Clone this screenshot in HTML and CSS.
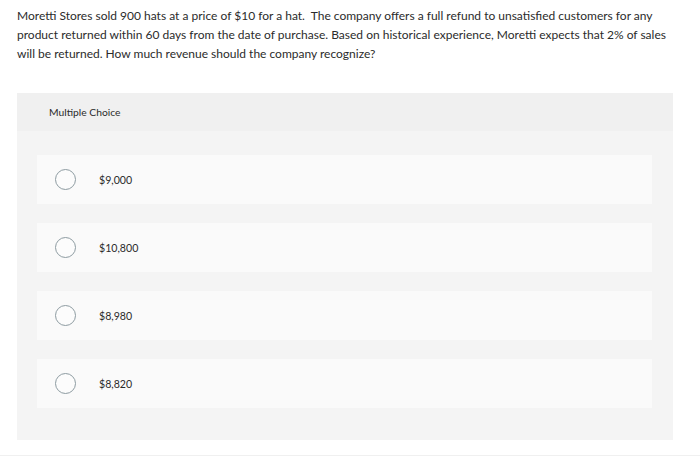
FILE: index.html
```html
<!DOCTYPE html>
<html>
<head>
<meta charset="utf-8">
<link rel="stylesheet" href="styles.css">
</head>
<body>
<div class="page">
  <p class="question">Moretti Stores sold 900 hats at a price of $10 for a hat.&nbsp; The company offers a full refund to unsatisfied customers for any product returned within 60 days from the date of purchase. Based on historical experience, Moretti expects that 2% of sales will be returned. How much revenue should the company recognize?</p>
  <div class="panel">
    <div class="panel-head">Multiple Choice</div>
    <div class="options">
      <div class="option"><span class="radio"></span><span class="label">$9,000</span></div>
      <div class="option"><span class="radio"></span><span class="label">$10,800</span></div>
      <div class="option"><span class="radio"></span><span class="label">$8,980</span></div>
      <div class="option"><span class="radio"></span><span class="label">$8,820</span></div>
    </div>
  </div>
  <div class="bottom-line"></div>
</div>
</body>
</html>
```
FILE: styles.css
```css
html, body {
  margin: 0;
  padding: 0;
  background: #ffffff;
}
.page {
  width: 700px;
  height: 458px;
  font-family: Lato, "Open Sans", "Liberation Sans", sans-serif;
  color: #2b2b2b;
  display: flex;
  flex-direction: column;
}
.question {
  margin: 6px 0 0 17px;
  width: 656px;
  font-size: 12px;
  line-height: 19px;
}
.panel {
  margin: 30px 0 0 17px;
  width: 656px;
  height: 347px;
  background: #f4f4f4;
  display: flex;
  flex-direction: column;
}
.panel-head {
  height: 38px;
  background: #f0f0f0;
  display: flex;
  align-items: center;
  padding-left: 32px;
  font-size: 10.3px;
  color: #2b2b2b;
}
.options {
  display: flex;
  flex-direction: column;
  gap: 19px;
  padding: 24px 21px 0 20px;
}
.option {
  height: 49px;
  background: #fafafa;
  display: flex;
  align-items: center;
}
.radio {
  width: 19px;
  height: 19px;
  border: 1.5px solid #8d9ba1;
  border-radius: 50%;
  margin-left: 18px;
  background: #fcfcfc;
}
.label {
  margin-left: 23px;
  font-size: 10.6px;
  color: #2b2b2b;
}
.bottom-line {
  margin-top: 15px;
  height: 1px;
  background: #f0f0f0;
}
```
